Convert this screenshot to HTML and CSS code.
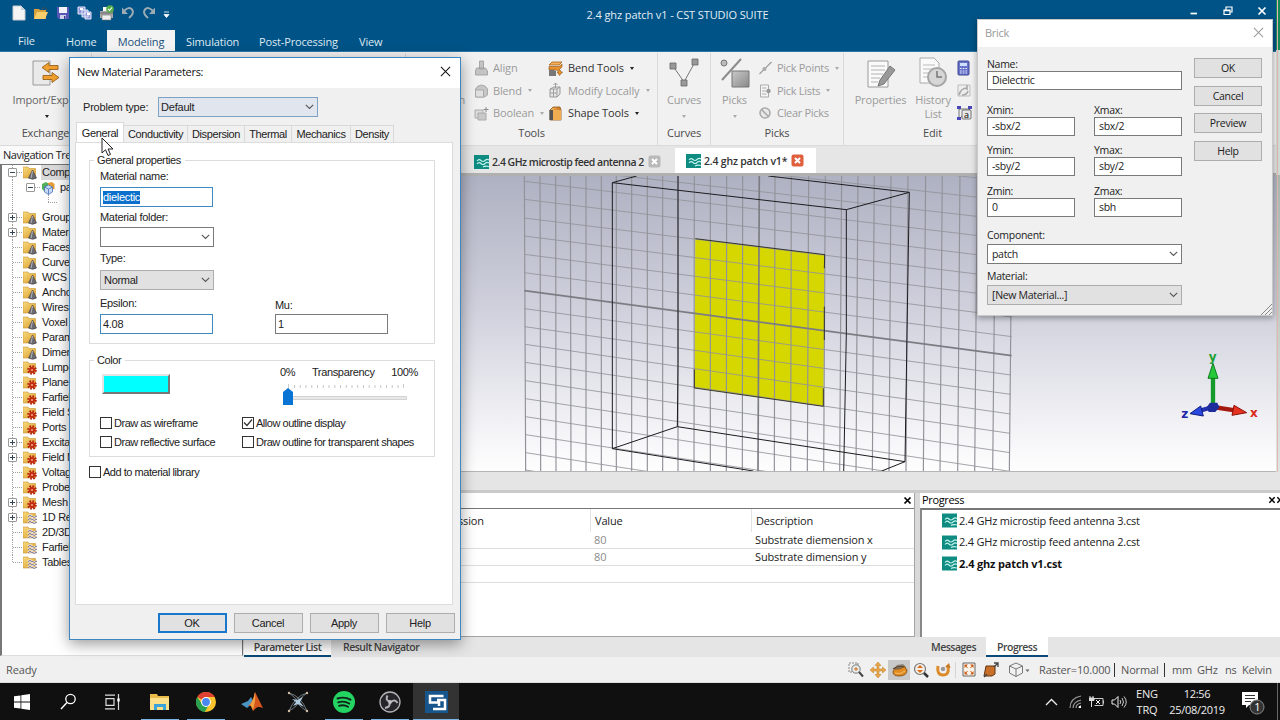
FILE: index.html
```html
<!DOCTYPE html>
<html lang="en">
<head>
<meta charset="utf-8">
<title>2.4 ghz patch v1 - CST STUDIO SUITE</title>
<link rel="stylesheet" href="styles.css">
</head>
<body>
<svg class="defs" width="0" height="0">
  <defs>
    <linearGradient id="fold" x1="0" y1="0" x2="1" y2="1"><stop offset="0" stop-color="#f8dc80"/><stop offset="1" stop-color="#d99a28"/></linearGradient>
    <linearGradient id="gry" x1="0" y1="0" x2="1" y2="1"><stop offset="0" stop-color="#c8c8c8"/><stop offset="1" stop-color="#8a8a8a"/></linearGradient>
    <linearGradient id="org" x1="0" y1="0" x2="1" y2="0"><stop offset="0" stop-color="#f6b860"/><stop offset="1" stop-color="#c8701a"/></linearGradient>
    <symbol id="folder" viewBox="0 0 14 14"><path d="M0 1h5l1 1.500h6.500V12H0z" fill="url(#fold)" stroke="#c99532" stroke-width=".6"/></symbol>
    <symbol id="f-cone" viewBox="0 0 14 14"><use href="#folder" width="14" height="14"/><path d="M9.500 4L5.500 12q4 2.500 8 0z" fill="#6a6a70" stroke="#3c3c42" stroke-width=".6"/><path d="M9.500 5L8 12.300" stroke="#b5b5bb"/></symbol>
    <symbol id="f-gear" viewBox="0 0 14 14"><use href="#folder" width="14" height="14"/><circle cx="9" cy="9" r="3.700" fill="none" stroke="#b3200f" stroke-width="2.200" stroke-dasharray="1.600 1.300"/><circle cx="9" cy="9" r="3" fill="#c22a16"/><circle cx="9" cy="9" r="1" fill="#f3b080"/></symbol>
    <symbol id="f-wave" viewBox="0 0 14 14"><use href="#folder" width="14" height="14"/><path d="M5 5.500q2-2 4 0t5-.5M5 8.500q2-2 4 0t5-.5M5 11.500q2-2 4 0t5-.5" fill="none" stroke="#fff" stroke-width="2"/><path d="M5 5.500q2-2 4 0t5-.5M5 8.500q2-2 4 0t5-.5M5 11.500q2-2 4 0t5-.5" fill="none" stroke="#5c5070" stroke-width=".9"/></symbol>
    <symbol id="cubes" viewBox="0 0 14 14"><path d="M1 3l4-2 3 2v6L4 11 1 8z" fill="#4fae58"/><path d="M7 2l4-1 2.500 2v5L10 9 7 7z" fill="#e69b35"/><path d="M3.500 6L7.500 4l4 2v5l-4 2.500-4-2.500z" fill="#c5d8f5" stroke="#4a72b8" stroke-width=".8"/><path d="M3.500 6l4 2 4-2M7.500 8v5.500" fill="none" stroke="#4a72b8" stroke-width=".8"/></symbol>
    <symbol id="cst" viewBox="0 0 15 14"><path d="M0 0h15v14H0z" fill="#0e8c82"/><path d="M3 6q2-2.500 4-.5t4 0 4-.5M3 9q2-2.500 4-.5t4 0 4-.5M9 12q2-1.500 6-.5" fill="none" stroke="#c4f3ec" stroke-width="1.100"/></symbol>
    <symbol id="chev" viewBox="0 0 9 6"><path d="M.8.8l3.700 3.700L8.200.8" fill="none" stroke="#555" stroke-width="1.100"/></symbol>
    <symbol id="xmark" viewBox="0 0 12 12"><path d="M1 1l10 10M11 1L1 11" fill="none" stroke="currentColor" stroke-width="1.100"/></symbol>
    <symbol id="xbold" viewBox="0 0 9 9"><path d="M1.500 1.500l6 6M7.500 1.500l-6 6" fill="none" stroke="currentColor" stroke-width="1.700"/></symbol>
    <symbol id="tabx" viewBox="0 0 13 13"><rect x=".5" y=".5" width="12" height="12" rx="2" fill="currentColor"/><path d="M4 4l5 5M9 4L4 9" stroke="#fff" stroke-width="2"/></symbol>
  </defs>
</svg>

<div class="app">
  <header class="titlebar">
    <div class="quick">
      <svg width="14" height="16" viewBox="0 0 14 16"><path d="M1 1h8l4 4v10H1z" fill="#f4f4f4" stroke="#c5ccd2"/><path d="M9 1v4h4z" fill="#c9d0d6"/></svg>
      <svg width="16" height="14" viewBox="0 0 16 14"><path d="M1 3h5l1 1h6v9H1z" fill="#d8a03c"/><path d="M4 6h11l-3 7H1z" fill="#f9cf6c"/><path d="M9 3q3-3 5 1" fill="none" stroke="#4a4a4a"/></svg>
      <svg width="14" height="14" viewBox="0 0 14 14"><path d="M1 1h12v12H3l-2-2z" fill="#5656b8"/><path d="M3 1h8v6H3z" fill="#f2f2fa"/><path d="M4 9h6v4H4z" fill="#d0d0e8"/><path d="M8 10h1.500v3H8z" fill="#3a3a90"/></svg>
      <svg width="15" height="14" viewBox="0 0 15 14"><path d="M1 1h7v7H1zM5 4h6v7H5zM8 6h6v7H8z" fill="#9097d8" stroke="#e4e6fa"/><path d="M3 2h3v2H3zM10 7h3v2h-3z" fill="#fff"/></svg>
      <svg width="15" height="16" viewBox="0 0 15 16"><path d="M4 2h7v5H4z" fill="#fff"/><path d="M1 6h13v7H1z" fill="#a8a8a8"/><path d="M3 10h9v5H3z" fill="#eee" stroke="#777" stroke-width=".6"/><path d="M1 8h13" stroke="#666"/><circle cx="11" cy="4" r="3.800" fill="#54ae48"/><path d="M9 4l1.500 1.500L13 2.500" fill="none" stroke="#fff" stroke-width="1.100"/></svg>
      <svg width="14" height="13" viewBox="0 0 14 13"><path d="M3 5q5-5 8-1.500T8 12" fill="none" stroke="#9caab4" stroke-width="2"/><path d="M1 1.500V8h6z" fill="#9caab4"/></svg>
      <svg width="14" height="13" viewBox="0 0 14 13"><path d="M11 5Q6 0 3 3.500T6 12" fill="none" stroke="#9caab4" stroke-width="2"/><path d="M13 1.500V8H7z" fill="#9caab4"/></svg>
      <svg class="qmore" width="7" height="7" viewBox="0 0 7 7"><path d="M1 1h5M1 3.500h5L3.500 6.500z" stroke="#fff" stroke-width=".8" fill="#fff"/></svg>
    </div>
    <div class="apptitle">2.4 ghz patch v1 - CST STUDIO SUITE</div>
    <div class="winctl">
      <svg width="10" height="10" viewBox="0 0 10 10"><path d="M1.500 7.500h6.500" stroke="#fff" stroke-width="1.700"/></svg>
      <svg width="10" height="10" viewBox="0 0 10 10"><path d="M3 3.500V1h6v5H7M1 4h6v4.500H1zM1 4.600h6" fill="none" stroke="#fff" stroke-width="1.200"/></svg>
      <svg width="10" height="10" viewBox="0 0 10 10"><path d="M1.500 1.500l7 7M8.500 1.500l-7 7" stroke="#fff" stroke-width="1.700"/></svg>
    </div>
  </header>
  <nav class="menubar">
    <span class="m-file">File</span><span class="m-home">Home</span><span class="m-on">Modeling</span><span class="m-sim">Simulation</span><span class="m-post">Post-Processing</span><span class="m-view">View</span>
  </nav>

  <section class="ribbon">
    <div class="grp g-ex">
      <div class="big">
        <svg width="28" height="26" viewBox="0 0 28 26"><path d="M1 1h17v24H1z" fill="#e9e9e9" stroke="#9a9a9a"/><path d="M26 5.500H17V2.500L10 7.500l7 5v-3h9z" fill="#f0a030" stroke="#9a6218" stroke-width=".9"/><path d="M11 15.500h9v-3l7 5-7 5v-3h-9z" fill="#f0a030" stroke="#9a6218" stroke-width=".9"/></svg>
        <span class="dk">Import/Exp</span><i class="dn"></i>
      </div>
      <div class="glabel">Exchange</div>
    </div>
    <div class="grp g-gap"></div>
    <div class="grp g-tools">
      <div class="cols">
        <div class="hidn">n</div>
        <div class="c1">
          <div class="rt"><svg width="14" height="16" viewBox="0 0 14 16"><path d="M2 8h9l2 3v4H1v-4zM5 1h4v8H5z" fill="#c4c4c4" stroke="#999" stroke-width=".8"/></svg>Align</div>
          <div class="rt"><svg width="14" height="14" viewBox="0 0 14 14"><path d="M1 5q2-4 6-4t6 4v6l-3 2H1z" fill="#c6c6c6" stroke="#aaa"/><path d="M1 6h8v7H1z" fill="#e0e0e0" stroke="#aaa"/></svg>Blend<i class="dn"></i></div>
          <div class="rt"><svg width="15" height="15" viewBox="0 0 15 15"><path d="M1 4h8v8H1z" fill="#ddd" stroke="#aaa"/><path d="M4 7h8v7H4z" fill="#c9c9c9" stroke="#aaa"/><path d="M12 1v5M9.500 3.500h5" stroke="#888"/></svg>Boolean<i class="dn"></i></div>
        </div>
        <div class="c2">
          <div class="rt on"><svg width="15" height="15" viewBox="0 0 15 15"><path d="M4 1h10l-3 3H1z" fill="#f6b058" stroke="#a8661c" stroke-width=".8"/><path d="M1 5.500h10L14 3v3l-3 3q2 0 2 2h1.500l-3 3.500L9 11h1.500q0-2-3-2H1z" fill="#e8922e" stroke="#8a5216" stroke-width=".6"/><path d="M1 9q4-1 7 1v5H1z" fill="#777"/></svg>Bend Tools<i class="dn"></i></div>
          <div class="rt"><svg width="15" height="15" viewBox="0 0 15 15"><path d="M2 6l4-2h6v7l-3 3H2z" fill="#e6e6e6" stroke="#999"/><path d="M2 6h7v8M9 6l3-2M2 10h7M5.500 6v8M7.500 5V0M5.500 2l2-2 2 2" fill="none" stroke="#999" stroke-width=".9"/></svg>Modify Locally<i class="dn"></i></div>
          <div class="rt on"><svg width="15" height="15" viewBox="0 0 15 15"><path d="M2 4l3-3h7l1 3v10H2z" fill="url(#org)" stroke="#8b581e" stroke-width=".8"/><path d="M5 4h8v10H5z" fill="#efac50"/><path d="M1.500 4H5v10H1.500z" fill="#555"/></svg>Shape Tools<i class="dn"></i></div>
        </div>
      </div>
      <div class="glabel">Tools</div>
    </div>
    <div class="grp g-curves">
      <div class="big">
        <svg width="30" height="30" viewBox="0 0 30 30"><path d="M4 8l11 16L26 4" fill="none" stroke="#777"/><path d="M1 5h6v6H1zM23 1h6v6h-6zM12 22h6v6h-6z" fill="#999" stroke="#666" stroke-width=".8"/></svg>
        <span>Curves</span><i class="dn"></i>
      </div>
      <div class="glabel">Curves</div>
    </div>
    <div class="grp g-picks">
      <div class="cols">
        <div class="big">
          <svg width="30" height="30" viewBox="0 0 30 30"><circle cx="4" cy="5" r="3" fill="#bbb" stroke="#777"/><path d="M2 22L21 1" stroke="#8b8b8b" stroke-width="2"/><path d="M12 13h17v16H12z" fill="url(#gry)" stroke="#777"/></svg>
          <span>Picks</span><i class="dn"></i>
        </div>
        <div class="c3">
          <div class="rt"><svg width="14" height="14" viewBox="0 0 14 14"><path d="M1 13L13 1" stroke="#999" stroke-width="1.200"/><circle cx="6" cy="8" r="2" fill="#aaa"/></svg>Pick Points<i class="dn"></i></div>
          <div class="rt"><svg width="14" height="14" viewBox="0 0 14 14"><path d="M2 1h8v12H2z" fill="#f6f6f6" stroke="#aaa"/><path d="M3.500 4H8M3.500 7H8M3.500 10H8" stroke="#aaa"/><circle cx="10" cy="7" r="2.200" fill="#999"/></svg>Pick Lists<i class="dn"></i></div>
          <div class="rt"><svg width="14" height="14" viewBox="0 0 14 14"><circle cx="6.500" cy="7" r="5" fill="#e8e8e8" stroke="#aaa" stroke-width="1.600"/><path d="M3 3.500l7.500 7.500" stroke="#aaa" stroke-width="1.600"/></svg>Clear Picks</div>
        </div>
      </div>
      <div class="glabel">Picks</div>
    </div>
    <div class="grp g-edit">
      <div class="cols">
        <div class="big b-prop">
          <svg width="30" height="30" viewBox="0 0 30 30"><path d="M2 3h20v26H2z" fill="#fafafa" stroke="#999"/><path d="M5 8h14M5 12h14M5 16h12M5 20h9M5 24h7" stroke="#b2b2b2"/><path d="M24 8l5 4-11 14-6 2 2-6z" fill="#999" stroke="#777"/></svg>
          <span>Properties</span>
        </div>
        <div class="big b-hist">
          <svg width="30" height="32" viewBox="0 0 30 32"><path d="M2 1h14l5 5v20H2z" fill="#fafafa" stroke="#aaa"/><path d="M5 8h12M5 12h10M5 16h6M5 20h5" stroke="#bbb"/><circle cx="19" cy="20" r="9" fill="#d6d6d6" stroke="#a5a5a5" stroke-width="2"/><path d="M19 14v6h5" stroke="#777" stroke-width="1.500" fill="none"/></svg>
          <span>History</span><span class="l2">List</span>
        </div>
        <div class="c4">
          <svg width="14" height="16" viewBox="0 0 14 16"><rect x="1" y="1" width="11" height="14" rx="1" fill="#6673c8" stroke="#3c4794"/><path d="M3 3h7v3H3z" fill="#cfe0ff"/><path d="M3 8.500h7M3 11h7M3 13h7" stroke="#dfe4ff" stroke-dasharray="1.700 1"/></svg>
          <svg width="14" height="15" viewBox="0 0 14 15"><path d="M1 2h12v11H1z" fill="#eee" stroke="#bbb"/><path d="M2 12Q4 5 10 5M10 2v5M5 12q5 0 6-4" fill="none" stroke="#a9a9a9" stroke-width="1.600"/></svg>
          <svg width="15" height="15" viewBox="0 0 15 15"><path d="M2 14V4h11L2 14" fill="none" stroke="#555" stroke-width=".8"/><path d="M0 1h4v3H0zM0 12h4v3H0zM11 1h4v3h-4z" fill="#4946b8"/><rect x="5" y="5" width="9" height="9" rx="1" fill="#e8e8e8" stroke="#555" stroke-width=".8"/><text x="7" y="12.500" class="mini">a</text></svg>
        </div>
      </div>
      <div class="glabel">Edit</div>
    </div>
  </section>

  <div class="work">
    <aside class="navpane">
      <div class="navhead">Navigation Tre</div>
      <div class="tree">
        <div class="ti root sel"><b class="pm mi"></b><svg><use href="#f-cone"/></svg><span>Compo</span></div>
        <div class="ti sub"><b class="pm mi"></b><svg><use href="#cubes"/></svg><span>pa</span></div>
        <div class="ti leaf"></div>
        <div class="ti"><b class="pm"></b><svg><use href="#f-cone"/></svg><span>Group</span></div>
        <div class="ti"><b class="pm"></b><svg><use href="#f-cone"/></svg><span>Materi</span></div>
        <div class="ti"><svg><use href="#f-cone"/></svg><span>Faces</span></div>
        <div class="ti"><svg><use href="#f-cone"/></svg><span>Curve</span></div>
        <div class="ti"><svg><use href="#f-cone"/></svg><span>WCS</span></div>
        <div class="ti"><svg><use href="#f-cone"/></svg><span>Ancho</span></div>
        <div class="ti"><svg><use href="#f-cone"/></svg><span>Wires</span></div>
        <div class="ti"><svg><use href="#f-cone"/></svg><span>Voxel</span></div>
        <div class="ti"><svg><use href="#f-cone"/></svg><span>Param</span></div>
        <div class="ti"><svg><use href="#f-cone"/></svg><span>Dimen</span></div>
        <div class="ti"><svg><use href="#f-gear"/></svg><span>Lumpe</span></div>
        <div class="ti"><svg><use href="#f-gear"/></svg><span>Plane</span></div>
        <div class="ti"><svg><use href="#f-gear"/></svg><span>Farfiel</span></div>
        <div class="ti"><svg><use href="#f-gear"/></svg><span>Field S</span></div>
        <div class="ti"><svg><use href="#f-gear"/></svg><span>Ports</span></div>
        <div class="ti"><b class="pm"></b><svg><use href="#f-gear"/></svg><span>Excita</span></div>
        <div class="ti"><b class="pm"></b><svg><use href="#f-gear"/></svg><span>Field M</span></div>
        <div class="ti"><svg><use href="#f-gear"/></svg><span>Voltag</span></div>
        <div class="ti"><svg><use href="#f-gear"/></svg><span>Probe</span></div>
        <div class="ti"><b class="pm"></b><svg><use href="#f-gear"/></svg><span>Mesh</span></div>
        <div class="ti"><b class="pm"></b><svg><use href="#f-wave"/></svg><span>1D Re</span></div>
        <div class="ti"><svg><use href="#f-wave"/></svg><span>2D/3D</span></div>
        <div class="ti"><svg><use href="#f-wave"/></svg><span>Farfiel</span></div>
        <div class="ti last"><svg><use href="#f-wave"/></svg><span>Tables</span></div>
      </div>
    </aside>
    <main class="center">
      <div class="doctabs">
        <div class="dt d1"><svg width="15" height="14"><use href="#cst"/></svg><span>2.4 GHz microstip feed antenna 2</span><svg class="cx" width="13" height="13"><use href="#tabx"/></svg></div>
        <div class="dt d2"><svg width="15" height="14"><use href="#cst"/></svg><span>2.4 ghz patch v1*</span><svg class="cx red" width="13" height="13"><use href="#tabx"/></svg></div>
      </div>
      <svg class="view" width="1037" height="295" viewBox="-831 18 3111 885">
        <defs><linearGradient id="sky" x1="0" y1="0" x2="0" y2="1"><stop offset="0" stop-color="#adb0c1"/><stop offset=".45" stop-color="#cfd0dc"/><stop offset=".85" stop-color="#f4f4f7"/><stop offset="1" stop-color="#fff"/></linearGradient></defs>
        <path d="M-840 0h3200v920h-3200z" fill="url(#sky)"/>
        <path d="M526 206L915 254 910 709 523 654z" fill="#d6d600"/>
        <g fill="none" stroke="#929399" stroke-width="3.500">
          <path d="M13 0L17 910M60 0L62 910M107 0L108 910M151 0L153 910M198 0V910M244 0V910M289 0V910M335 0V910M382 0V910M428 0V910M474 0V910M523 0L522 910M571 0V910M620 0L619 910M668 0L667 910M765 0L763 910M814 0L812 910M866 0L862 910M916 0L911 910M965 0L959 910M1014 0L1008 910M1063 0L1057 910M1113 0L1107 910M1164 0L1158 910M1217 0L1210 910M1267 0L1260 910M1320 0L1313 910M1372 0L1364 910M1427 0L1418 910M1477 0L1468 910"/>
          <path d="M13-124L1475 35M13-70L1475 93M13-16L1475 151M13 34L1475 209M13 88L1475 267M13 144L1475 325M13 198L1475 383M13 253L1475 441M13 308L1475 500M14 416L1473 615M14 470L1472 673M15 523L1471 732M15 577L1470 790M16 632L1470 848M16 686L1469 904M16 740L1468 960M17 794L1468 1016M17 848L1467 1072M17 900L1467 1128" stroke-width="2.500"/>
          <path d="M718 0L714 910" stroke="#7c7d83" stroke-width="5"/>
          <path d="M13 362L1475 557" stroke="#7c7d83" stroke-width="5"/>
        </g>
        <g fill="none" stroke="#1c1c20" stroke-width="3">
          <path d="M277 836V38L979 119V490L971 910M277 38L350 18M745 18L1168 67L979 119M1168 67L1164 300 1155 875M474 10V580L472 770L1155 875L1085 903M472 770L277 836L700 903"/>
          <path d="M526 206L915 254M914 255l-1 40M913 410v100M910 655v54L523 654v-56" stroke-width="2.500"/>
        </g>
        <path d="M2079 711V615" stroke="#159a2c" stroke-width="13"/><path d="M2079 580L2064 625H2094z" fill="#28c83c" stroke="#0c7c1c" stroke-width="3"/>
        <path d="M2079 711L2150 722" stroke="#a41a10" stroke-width="13"/><path d="M2180 728L2142 706 2136 736z" fill="#e63220" stroke="#8c1008" stroke-width="3"/>
        <path d="M2079 711L2040 722" stroke="#2230b0" stroke-width="13"/><path d="M2010 731L2042 708 2050 738z" fill="#2a48e0" stroke="#101c80" stroke-width="3"/>
        <path d="M2070 698h22l6 14-12 14h-20l-6-14z" fill="#1c2c9c"/>
        <text class="ax" x="2066" y="574" fill="#18a030">y</text><text class="ax" x="2190" y="740" fill="#d82818">x</text><text class="ax" x="1984" y="744" fill="#2028a8">z</text>
      </svg>
      <div class="band"></div>
      <div class="panels">
        <div class="params">
          <div class="phead"><svg width="9" height="9"><use href="#xbold"/></svg></div>
          <div class="ptable">
            <div class="prow ph"><span>ssion</span><span>Value</span><span>Description</span></div>
            <div class="prow"><span></span><span class="g">80</span><span>Substrate diemension x</span></div>
            <div class="prow"><span></span><span class="g">80</span><span>Substrate dimension y</span></div>
            <div class="prow"><span></span><span></span><span></span></div>
          </div>
        </div>
        <div class="progress">
          <div class="phead"><span>Progress</span><div class="xs"><svg width="8" height="8"><use href="#xbold"/></svg><svg width="8" height="8"><use href="#xbold"/></svg></div></div>
          <div class="plist">
            <div><svg width="15" height="15"><use href="#cst"/></svg>2.4 GHz microstip feed antenna 3.cst</div>
            <div><svg width="15" height="15"><use href="#cst"/></svg>2.4 GHz microstip feed antenna 2.cst</div>
            <div class="cur"><svg width="15" height="15"><use href="#cst"/></svg>2.4 ghz patch v1.cst</div>
          </div>
        </div>
      </div>
      <div class="btabs">
        <div class="bl"><span class="bt on">Parameter List</span><span class="bt rn">Result Navigator</span></div>
        <div class="br"><span class="bt ms">Messages</span><span class="bt on">Progress</span></div>
      </div>
    </main>
  </div>

  <footer class="status">
    <span class="ready">Ready</span>
    <div class="sicons">
      <span><svg width="16" height="16" viewBox="0 0 16 16"><path d="M1 1h9v9H1z" fill="none" stroke="#888" stroke-dasharray="2 1"/><circle cx="8" cy="7" r="4.200" fill="#e8edf0" stroke="#777"/><path d="M11 10l4 4.500" stroke="#444" stroke-width="2"/><path d="M6 7h4M8 5v4" stroke="#d07018"/></svg></span>
      <span><svg width="16" height="16" viewBox="0 0 16 16"><path d="M8 0l3 3.500H9v3.500h3.500V5L16 8l-3.500 3V9H9v3.500h2L8 16l-3-3.500h2V9H3.500v2L0 8l3.500-3v2H7V3.500H5z" fill="#eba848" stroke="#b87a28" stroke-width=".5"/></svg></span>
      <span class="son"><svg width="17" height="16" viewBox="0 0 17 16"><path d="M3 7l3-4 6-1 3 3v4l-5-2z" fill="#8c8478"/><path d="M2 10q0-3 5-3 4 0 6-3l3 4q0 6-8 6-6 0-6-4z" fill="#e08a20" stroke="#7c4a10" stroke-width=".8"/><path d="M2 7q5-4 11-2" stroke="#5c4630" stroke-width="1.300" fill="none"/><path d="M4 11q5 2 10-2" stroke="#f7c070" fill="none"/></svg></span>
      <span><svg width="16" height="16" viewBox="0 0 16 16"><circle cx="7" cy="7" r="5.500" fill="#f4eee6" stroke="#777" stroke-width="1.200"/><path d="M11 11l4 4" stroke="#333" stroke-width="2.500"/><path d="M4 6l3-3 3 3zM4 8l3 3 3-3z" fill="#d86c18"/></svg></span>
      <span><svg width="16" height="16" viewBox="0 0 16 16"><path d="M3 4q-1.500 9 5 9t5-8" fill="none" stroke="#dc8c28" stroke-width="3"/><path d="M10 5l4-4 1.500 5z" fill="#c87820"/><circle cx="8" cy="7" r="2.200" fill="#999"/></svg></span>
      <i class="ssep"></i>
      <span><svg width="14" height="15" viewBox="0 0 14 15"><path d="M1 1h12v13H1z" fill="#fbf3ea" stroke="#666"/><path d="M2.500 2.500H6L2.500 6zM11.500 2.500H8L11.500 6zM2.500 12.500H6L2.500 9zM11.500 12.500H8L11.500 9z" fill="#c85c18"/><path d="M3 3l2.500 3M11 3L8.500 6M3 12l2.500-3M11 12L8.500 9" stroke="#c85c18"/></svg></span>
      <span><svg width="16" height="16" viewBox="0 0 16 16"><path d="M3 4h9v8l-3 2H1z" fill="#c8702a" stroke="#653410"/><path d="M1 15l3-3M11 5l4-4M11 1h4v4" stroke="#444" stroke-width="1.300" fill="none"/></svg></span>
      <span class="cubeb"><svg width="24" height="16" viewBox="0 0 24 16"><path d="M1.500 4L8 1l6.500 3v7L8 14.500 1.500 11zM1.500 4L8 7l6.500-3M8 7v7.500" fill="#f2f2f2" stroke="#777"/><path d="M17.500 7.500h4L19.500 10z" fill="#666"/></svg></span>
    </div>
    <span class="s1">Raster=10.000</span><span class="s2">Normal</span><span class="s3">mm</span><span class="s4">GHz</span><span class="s5">ns</span><span class="s6">Kelvin</span>
  </footer>

  <footer class="taskbar">
    <div class="apps">
      <span><svg width="16" height="16" viewBox="0 0 16 16"><path d="M0 2.300l6.500-.9V7.600H0zM7.300 1.300L16 0v7.600H7.300zM0 8.400h6.500v6.200L0 13.700zM7.300 8.400H16V16l-8.700-1.300z" fill="#fff"/></svg></span>
      <span><svg width="17" height="17" viewBox="0 0 17 17"><circle cx="10.500" cy="6" r="4.700" fill="none" stroke="#fff" stroke-width="1.300"/><path d="M7 9.500L1 16" stroke="#fff" stroke-width="1.400"/></svg></span>
      <span class="tv"><svg width="17" height="16" viewBox="0 0 17 16"><path d="M1 1.200h10M1 14.800h10M2 4v8M10 4v8M2 4.600h8M2 11.400h8M14.500 0v16" fill="none" stroke="#ddd" stroke-width="1.200"/><path d="M13.300 4.500h2.400v3h-2.400z" fill="#fff"/></svg></span>
      <span class="run"><svg width="22" height="18" viewBox="0 0 22 18"><path d="M1 1h7l1 2h11v14H1z" fill="#e9bc48"/><path d="M1 5h19v12H1z" fill="#fbe08c"/><path d="M5 17v-6h12v6h-3v-3H8v3z" fill="#3ba2dc"/></svg></span>
      <span class="run"><svg width="22" height="22" viewBox="0 0 22 22"><circle cx="11" cy="11" r="10" fill="#fcc42c"/><path d="M11 11L2.300 6A10 10 0 0 1 19.700 6H11z" fill="#de4032"/><path d="M2.300 6a10 10 0 0 0 7.500 15L14 13.500 7 13z" fill="#27a050"/><circle cx="11" cy="11" r="4.900" fill="#fff"/><circle cx="11" cy="11" r="3.900" fill="#4888f0"/></svg></span>
      <span><svg width="22" height="20" viewBox="0 0 22 20"><path d="M0 12l7-3 3-4 3 5-7 6z" fill="#4a94c4"/><path d="M7 14q5-3 7-14 3 6 8 16-5-2-7 0l-3 3-2-5z" fill="#d5561c"/><path d="M14 0q-2 10-5 12l3 6q3-10 2-18z" fill="#f4a040"/></svg></span>
      <span><svg width="22" height="22" viewBox="0 0 22 22"><path d="M2 2q8 6 9 9T2 20M20 2q-8 6-9 9t9 9M2 2q12 3 18 18M20 2Q8 5 2 20" fill="none" stroke="#7c8890" stroke-width=".9"/><path d="M5 8l5 1 6-3-3 5 4 5-6-3-5 2 3-4z" fill="#b0cce0"/><g fill="#d4c0a0"><circle cx="2" cy="2" r="1.200"/><circle cx="20" cy="2" r="1.200"/><circle cx="2" cy="20" r="1.200"/><circle cx="20" cy="20" r="1.200"/></g></svg></span>
      <span class="run"><svg width="22" height="22" viewBox="0 0 22 22"><circle cx="11" cy="11" r="11" fill="#24d462"/><path d="M4.500 7.500q7-2.200 13 1.200M5.200 11.300q6-1.700 11 1.200M6 14.800q5-1.400 9 1" fill="none" stroke="#10241a" stroke-width="1.900" stroke-linecap="round"/></svg></span>
      <span class="run"><svg width="22" height="22" viewBox="0 0 22 22"><circle cx="11" cy="11" r="10" fill="#26262a" stroke="#b4b4b8" stroke-width="1.300"/><path d="M10.500 10.500Q6 9 8.500 4.500M12 11q4-3.500 6.500 1M10.500 12q1 4-4.500 5" fill="none" stroke="#b4b4b8" stroke-width="2"/><circle cx="11" cy="11" r="1.900" fill="#c4c4c8"/></svg></span>
      <span class="run act"><svg width="23" height="22" viewBox="0 0 23 22"><path d="M0 0h23v22H0z" fill="#17568c"/><path d="M18.500 5H5v6.500h9V15M8 18h12V9h-8" fill="none" stroke="#fff" stroke-width="2.500"/></svg></span>
    </div>
    <div class="tray">
      <svg class="t1" width="13" height="8" viewBox="0 0 13 8"><path d="M1 7l5.500-5.500L12 7" fill="none" stroke="#eee" stroke-width="1.300"/></svg>
      <svg class="t2" width="14" height="14" viewBox="0 0 14 14"><path d="M1 13Q1 3 12 1M4 13q0-6 8-8M7 13q0-4 5-5" fill="none" stroke="#999" stroke-width="1.200"/><path d="M9.500 13q0-2.500 2.500-2.500V13z" fill="#fff"/></svg>
      <svg class="t3" width="16" height="12" viewBox="0 0 16 12"><path d="M4 2.500h10v7H5.500M14.500 4.500v3" fill="none" stroke="#ccc"/><path d="M1 0v2M4 0v2M0 2h5v2.500H0zM2.500 4v7" stroke="#ddd" fill="#ddd"/><path d="M7 4l4 4M11 4L7 8" stroke="#fff"/></svg>
      <svg class="t4" width="16" height="14" viewBox="0 0 16 14"><path d="M1 5h2.500L7 1.500v11L3.500 9H1z" fill="none" stroke="#eee"/><path d="M9 5q1.500 2 0 4M11 3q3 4 0 8M13 1.500q4.500 5.500 0 11" fill="none" stroke="#ccc"/></svg>
      <div class="lang">ENG<br>TRQ</div>
      <div class="clock">12:56<br>25/08/2019</div>
      <svg class="t5" width="24" height="24" viewBox="0 0 24 24"><path d="M1 1h16v13H8l-3 3v-3H1z" fill="#fff"/><path d="M4 4.500h10M4 7.500h10M4 10.500h6" stroke="#333" stroke-width="1.100"/><circle cx="16" cy="16" r="7" fill="#333" stroke="#888"/><text x="13.200" y="20" class="one">1</text></svg>
      <i class="peek"></i>
    </div>
  </footer>
</div>

<div class="edge"></div>

<section class="dlg brick">
  <div class="dtitle"><span>Brick</span><svg width="11" height="11"><use href="#xmark"/></svg></div>
  <div class="bbody">
    <div class="bform">
      <label class="w2">Name:</label>
      <div class="inp w2">Dielectric</div>
      <label>Xmin:</label><label>Xmax:</label>
      <div class="inp">-sbx/2</div><div class="inp">sbx/2</div>
      <label>Ymin:</label><label>Ymax:</label>
      <div class="inp">-sby/2</div><div class="inp">sby/2</div>
      <label>Zmin:</label><label>Zmax:</label>
      <div class="inp">0</div><div class="inp">sbh</div>
      <label class="w2 up">Component:</label>
      <div class="inp w2 cmb">patch<svg width="9" height="6"><use href="#chev"/></svg></div>
      <label class="w2 up">Material:</label>
      <div class="inp w2 cmb gray">[New Material...]<svg width="9" height="6"><use href="#chev"/></svg></div>
    </div>
    <div class="bbtns"><div class="btn">OK</div><div class="btn">Cancel</div><div class="btn">Preview</div><div class="btn">Help</div></div>
  </div>
  <svg class="grip" width="11" height="11" viewBox="0 0 11 11"><path d="M0 11L11 0M4 11l7-7M8 11l3-3" stroke="#888"/></svg>
</section>

<section class="dlg mat">
  <div class="dtitle"><span>New Material Parameters:</span><svg width="12" height="12"><use href="#xmark"/></svg></div>
  <div class="prob"><span>Problem type:</span><div class="inp cmb">Default<svg width="9" height="6"><use href="#chev"/></svg></div></div>
  <div class="mtabs"><span class="on">General</span><span>Conductivity</span><span>Dispersion</span><span>Thermal</span><span>Mechanics</span><span>Density</span></div>
  <div class="pane">
    <fieldset class="fs1">
      <legend>General properties</legend>
      <div class="f1">
        <label>Material name:</label>
        <div class="inp foc"><mark>dielectic</mark></div>
        <label>Material folder:</label>
        <div class="inp cmb"><svg width="9" height="6"><use href="#chev"/></svg></div>
        <label>Type:</label>
        <div class="inp cmb gray">Normal<svg width="9" height="6"><use href="#chev"/></svg></div>
        <label>Epsilon:</label><label class="mu">Mu:</label>
        <div class="inp foc">4.08</div><div class="inp mui">1</div>
      </div>
    </fieldset>
    <fieldset class="fs2">
      <legend>Color</legend>
      <div class="f2">
        <div class="swatch"></div>
        <div class="slide">
          <div class="sl"><span>0%</span><span>Transparency</span><span>100%</span></div>
          <svg width="128" height="24" viewBox="0 0 128 24"><path d="M5.500 2v5M120.500 2v4" stroke="#ccc"/><path d="M11 4.500h107" stroke="#c8c8c8" stroke-width="3" stroke-dasharray="1 4.750"/><path d="M1.500 14.500h122v3H1.500z" fill="#e8e8e8" stroke="#d2d2d2"/><path d="M0 10l5-4 5 4v13H0z" fill="#0a74d4"/></svg>
        </div>
      </div>
      <div class="ck2">
        <div class="ck"><i></i>Draw as wireframe</div><div class="ck"><i><svg width="12" height="12" viewBox="0 0 12 12"><path d="M2 5.500l3 3L10 2.500" fill="none" stroke="#333" stroke-width="1.200"/></svg></i>Allow outline display</div>
        <div class="ck"><i></i>Draw reflective surface</div><div class="ck"><i></i>Draw outline for transparent shapes</div>
      </div>
    </fieldset>
    <div class="ck lib"><i></i>Add to material library</div>
  </div>
  <div class="mbtns"><div class="btn def">OK</div><div class="btn">Cancel</div><div class="btn">Apply</div><div class="btn">Help</div></div>
</section>

<svg class="cursor" width="13" height="20" viewBox="0 0 13 20"><path d="M1 1v15l3.500-3.200L7 18.500l2.500-1.100-2.400-5.400H12z" fill="#fff" stroke="#222"/></svg>
</body>
</html>
```
FILE: styles.css
```css
* { box-sizing: border-box; }
body { margin: 0; width: 1280px; height: 720px; overflow: hidden; font: 11px/14px "Open Sans", "Noto Sans", sans-serif; color: #222; letter-spacing: -0.15px; white-space: nowrap; position: relative; }
svg { display: block; flex: none; }
.defs { position: absolute; }
.app { display: flex; flex-direction: column; width: 1280px; height: 720px; background: #e5e5e5; }

.titlebar { height: 30px; background: #005386; display: flex; color: #e4eef5; }
.quick { display: flex; align-items: center; gap: 7px; width: 420px; padding: 0 0 5px 12px; }
.qmore { margin-top: 3px; }
.apptitle { width: 515px; text-align: center; padding-top: 8px; letter-spacing: -.1px; }
.winctl { flex: 1; display: flex; justify-content: flex-end; gap: 24px; padding: 6px 13px 0 0; }

.menubar { height: 22px; background: #005386; color: #dce9f2; display: flex; line-height: 23px; border-bottom: 1px solid #2b76a5; }
.menubar span { flex: none; height: 21px; }
.m-file { padding-left: 18px; width: 66px; line-height: 21px; }
.m-home { width: 41px; }
.m-on { width: 68px; text-align: center; background: #f3f3f3; color: #1c5079; }
.m-sim { padding-left: 11px; width: 84px; }
.m-post { width: 100px; }

.ribbon { height: 94px; background: #f1f1f1; display: flex; border-bottom: 1px solid #dadada; }
.grp { flex: none; display: flex; flex-direction: column; justify-content: space-between; border-right: 1px solid #d9d9d9; padding: 4px 0 5px; margin-top: 1px; color: #9b9b9b; overflow: hidden; }
.glabel { text-align: center; color: #4b4b4b; }
.g-ex { width: 92px; }
.g-gap { width: 314px; }
.g-tools { width: 252px; }
.g-curves { width: 53px; }
.g-picks { width: 133px; }
.g-edit { width: 178px; }
.cols { display: flex; }
.big { display: flex; flex-direction: column; align-items: center; }
.big svg { height: 32px; }
.big span { margin-top: 4px; }
.big .dn { margin: 8px 0 0; }
.g-ex .big { padding-right: 0; }
.g-ex .dk { color: #666; width: 66px; }
.dn { display: inline-block; border: 2.500px solid transparent; border-top: 3px solid #aaa; border-bottom: 0; margin-left: 6px; }
.g-ex .dn { border-top-color: #222; margin-left: 3px; }
.hidn { width: 68px; padding: 36px 9px 0 0; text-align: right; }
.c1 { width: 74px; }
.rt { display: flex; align-items: center; height: 22.500px; }
.rt svg { margin-right: 4px; width: 15px; }
.c2 .rt svg { margin-right: 5px; }
.c2 .rt { letter-spacing: -.1px; }
.rt.on { color: #333; }
.rt.on .dn { border-top-color: #222; }
.g-picks .big { width: 47px; }
.c3 .rt { letter-spacing: -.3px; }
.b-prop { width: 73px; }
.b-hist { width: 32px; }
.b-hist .l2 { margin-top: 0; }
.c4 { display: flex; flex-direction: column; gap: 7px; padding: 3px 0 0 8px; }
.mini { font: 9px "Open Sans", sans-serif; }

.work { height: 511px; display: flex; }
.navpane { width: 243px; display: flex; flex-direction: column; background: #f0f0f0; }
.navhead { height: 18px; padding: 2px 0 0 3px; color: #222; background: #fafafa; letter-spacing: -.45px; }
.tree { height: 492px; background: #fff; border: 1px solid #777; border-left: 2px solid #777; border-bottom-color: #ddd; font: 11px/15px "Liberation Sans", sans-serif; letter-spacing: -.3px; color: #222; }
.ti { height: 15px; display: flex; align-items: center; padding-left: 21px; position: relative; background: repeating-linear-gradient(180deg, #a0a0a0 0 1px, transparent 1px 2px) 10px 0 / 1px 15px no-repeat, repeating-linear-gradient(90deg, #a0a0a0 0 1px, transparent 1px 2px) 11px 7px / 10px 1px no-repeat; }
.last { background: repeating-linear-gradient(180deg, #a0a0a0 0 1px, transparent 1px 2px) 10px 0 / 1px 8px no-repeat, repeating-linear-gradient(90deg, #a0a0a0 0 1px, transparent 1px 2px) 11px 7px / 10px 1px no-repeat; }
.ti svg { width: 14px; height: 14px; margin-right: 4px; }
.ti span { padding-left: 1px; }
.sel span { background: #d9d9d9; width: 60px; }
.sub { padding-left: 39px; background: repeating-linear-gradient(180deg, #a0a0a0 0 1px, transparent 1px 2px) 10px 0 / 1px 15px no-repeat, repeating-linear-gradient(90deg, #a0a0a0 0 1px, transparent 1px 2px) 29px 7px / 10px 1px no-repeat; }
.leaf { background: repeating-linear-gradient(180deg, #a0a0a0 0 1px, transparent 1px 2px) 10px 0 / 1px 15px no-repeat, repeating-linear-gradient(180deg, #a0a0a0 0 1px, transparent 1px 2px) 46px 0 / 1px 8px no-repeat, repeating-linear-gradient(90deg, #a0a0a0 0 1px, transparent 1px 2px) 46px 7px / 10px 1px no-repeat; }
.pm { position: absolute; left: 6px; top: 3px; width: 9px; height: 9px; border: 1px solid #999; border-radius: 1px; background: linear-gradient(#345, #345) 1px 3px / 5px 1px no-repeat, linear-gradient(#345, #345) 3px 1px / 1px 5px no-repeat, #fff; }
.pm.mi { background: linear-gradient(#345, #345) 1px 3px / 5px 1px no-repeat, #fff; }
.sub .pm { left: 24px; }

.center { width: 1037px; display: flex; flex-direction: column; }
.doctabs { height: 30px; background: #e6e6e6; display: flex; padding: 2px 0 0 220px; border-bottom: 3px solid #b0b0b0; font-weight: 600; font-size: 10.500px; letter-spacing: -.2px; }
.dt { display: flex; align-items: center; height: 25px; color: #333; }
.d1 { width: 212px; padding: 2px 0 0 11px; gap: 3px; letter-spacing: -.5px; }
.d2 { width: 141px; background: #fff; padding-left: 11px; gap: 3px; }
.cx { color: #b9b9b9; margin-left: 1px; }
.cx.red { color: #e0603e; }
.view { height: 295px; }
.ax { font: bold 36px "DejaVu Sans", sans-serif; }
.band { height: 22px; background: #e5e5e5; border-top: 1px solid #b5b5b5; border-bottom: 3px solid #cacaca; }
.panels { height: 144px; display: flex; gap: 5px; background: #d9d9d9; }
.params { width: 672px; background: #fff; border-right: 1px solid #a5a5a5; }
.phead { height: 15px; display: flex; align-items: center; justify-content: flex-end; padding: 0 2px 1px 0; background: #fff; letter-spacing: -.35px; color: #000; }
.ptable { border-top: 1px solid #777; height: 129px; border-bottom: 1px solid #a5a5a5; }
.prow { height: 17px; display: grid; grid-template-columns: 347px 161px 1fr; align-items: center; border-bottom: 1px solid #ddd; }
.prow span { padding-left: 4px; line-height: 14px; }
.prow .g { color: #8c8c8c; }
.ph { height: 23px; border: 0; }
.ph span { border-left: 1px solid #e2e2e2; line-height: 23px; }
.ph span:first-child { padding-left: 215px; }
.prow > :first-child { border-left: 0; }
.progress { flex: 1; background: #fff; }
.progress .phead { justify-content: space-between; padding: 0 0 1px 2px; overflow: hidden; }
.xs { display: flex; width: 12px; }
.plist { border-top: 2px solid #777; border-left: 2px solid #888; height: 129px; padding: 0 0 0 20px; letter-spacing: -.2px; }
.plist div { display: flex; gap: 2px; align-items: center; height: 21.500px; }
.plist .cur { font-weight: 700; color: #111; letter-spacing: -.15px; }
.btabs { height: 20px; display: flex; background: #e5e5e5; font-weight: 600; font-size: 10.500px; color: #444; letter-spacing: -.5px; }
.bl { width: 688px; display: flex; padding-left: 1px; }
.br { display: flex; }
.bt { height: 20px; line-height: 20px; }
.bt.on { background: #fff; border-bottom: 2px solid #0a4a78; text-align: center; width: 87px; }
.rn { padding-left: 12px; }
.ms { width: 55px; }
.br .on { width: 62px; }

.status { height: 26px; background: #f0f0f0; display: flex; align-items: center; color: #555; border-bottom: 1px solid #ddd; }
.ready { width: 845px; padding-left: 6px; }
.sicons { display: flex; align-items: center; width: 194px; }
.sicons span { width: 21.700px; height: 20px; display: flex; align-items: center; justify-content: center; }
.sicons .son { background: #c9c9c9; }
.ssep { width: 1px; height: 16px; background: #d5d5d5; margin: 0 2px; }
.sicons .cubeb { width: 36px; }
.s1 { width: 76px; border-right: 1px solid #333; }
.s2 { width: 50px; padding-left: 6px; border-right: 1px solid #333; }
.s3 { width: 32px; padding-left: 7px; }
.s4 { width: 28px; }
.s5 { width: 17px; }

.taskbar { height: 37px; background: #101010; display: flex; justify-content: space-between; color: #eee; }
.apps { display: flex; margin-left: -1px; }
.apps span { width: 46px; height: 37px; display: flex; align-items: center; justify-content: center; }
.apps .tv { padding-right: 3px; }
.run { background: linear-gradient(#7ab4e4, #7ab4e4) 50% 100% / 38px 1px no-repeat; }
.act { background: linear-gradient(#7ab4e4, #7ab4e4) 50% 100% / 46px 1px no-repeat, #333; }
.tray { display: flex; align-items: center; width: 235px; }
.t2 { margin-left: 11px; }
.t3 { margin-left: 6px; }
.t4 { margin-left: 6px; }
.lang { width: 40px; text-align: center; line-height: 16px; }
.clock { width: 60px; text-align: center; line-height: 16px; letter-spacing: -.3px; }
.t5 { margin-left: 14px; margin-top: 2px; }
.one { font: 11px "Open Sans", sans-serif; fill: #fff; }
.peek { width: 1px; height: 37px; background: #666; margin-left: 12px; }
.edge { position: absolute; right: 0; top: 0; width: 4px; height: 472px; background: linear-gradient(90deg, transparent 1px, #e8b4b4 1px 2px, transparent 2px), linear-gradient(#148a58 50px, #cddcd4 50px 175px, #a8b8b0 175px, #dde6e2); }

.dlg { position: absolute; background: #f0f0f0; }
.dtitle { background: #fff; display: flex; align-items: center; justify-content: space-between; }
.inp { border: 1px solid #7a7a7a; background: #fff; display: flex; align-items: center; padding-left: 3px; color: #222; }
.cmb { justify-content: space-between; padding-right: 3px; }
.gray { background: #e1e1e1; border-color: #adadad; }
.btn { background: #e1e1e1; border: 1px solid #adadad; height: 20px; line-height: 18px; text-align: center; width: 69px; color: #222; }

.brick { left: 977px; top: 19px; width: 296px; height: 297px; border: 1px solid #c9c9c9; box-shadow: 0 2px 6px rgba(0,0,0,.35); font-size: 10.500px; letter-spacing: -.3px; }
.brick .dtitle { height: 27px; padding: 0 8px 2px 7px; color: #999; font-size: 11px; }
.bbody { display: flex; padding-left: 9px; gap: 12px; }
.bform { width: 195px; display: grid; grid-template-columns: 88px 88px; column-gap: 19px; grid-template-rows: 24px 19px 27px 19px 21px 19px 22px 19px 27px 20px 21px 20px; }
.bform label { align-self: end; }
.bform .inp { padding-left: 4px; padding-bottom: 1px; }
.bform .up { padding-bottom: 2px; }
.w2 { grid-column: 1 / 3; }
.bbtns { padding-top: 11px; display: flex; flex-direction: column; gap: 7.500px; }
.bbtns .btn { width: 68px; }
.grip { position: absolute; right: 0; bottom: 0; }

.mat { left: 69px; top: 57px; width: 392px; height: 583px; border: 1px solid #3c86c4; box-shadow: 0 4px 14px rgba(0,0,0,.4); font-family: "Liberation Sans", sans-serif; letter-spacing: -.45px; }
.mat .dtitle { height: 30px; padding: 0 9px 3px 7px; font: 11px "Open Sans", sans-serif; letter-spacing: -.3px; color: #111; }
.mat .dtitle svg { width: 11px; height: 11px; }
.prob { display: flex; align-items: center; padding: 9px 0 0 13px; height: 29px; letter-spacing: -.2px; }
.prob span { width: 75px; }
.prob .inp { width: 160px; height: 20px; padding-left: 2px; background: #e1e6ee; border-color: #7da2c4; }
.mtabs { display: flex; align-items: flex-end; padding-left: 6px; height: 25px; }
.mtabs span { height: 17px; border: 1px solid #d9d9d9; border-left: 0; border-bottom: 0; padding: 0 3px; line-height: 17px; text-align: center; width: 57px; letter-spacing: -.4px; }
.mtabs .on { width: 48px; height: 20px; line-height: 21px; background: #fff; border-left: 1px solid #d9d9d9; }
.mtabs span:nth-child(2) { width: 64px; }
.mtabs span:nth-child(4) { width: 47px; }
.mtabs span:nth-child(5) { width: 59px; }
.mtabs span:nth-child(6) { width: 43px; }
.pane { margin: 0 7px 0 5px; height: 463px; border: 1px solid #dcdcdc; background: #fff; padding: 11px 0 0 13px; }
fieldset { margin: 0; padding: 0 0 0 10px; border: 1px solid #dcdcdc; width: 346px; min-width: 0; }
legend { padding: 0 4px 0 3px; margin-left: -6px; height: 12px; line-height: 12px; letter-spacing: -.4px; }
.fs1 { height: 190px; }
.f1 { display: grid; grid-template-columns: 175px 113px; grid-template-rows: 21px 20px 20px 20px 23px 20px 24px 20px; letter-spacing: -.3px; }
.f1 > * { grid-column: 1; }
.f1 label { align-self: center; padding-bottom: 1px; }
.f1 label:nth-of-type(4) { padding-top: 2px; }
.f1 .inp { width: 113px; padding-left: 2px; }
.f1 .cmb { width: 114px; padding-left: 3px; }
.f1 .mu, .f1 .mui { grid-column: 2; }
.f1 .mu { padding-top: 6px; grid-row: 7; }
.f1 .mui { grid-row: 8; }
.foc { border-color: #3f88c0; }
mark { background: #0a70cc; color: #fff; line-height: 13px; }
.cmb svg:only-child { margin-left: auto; }
.fs2 { height: 103px; margin-top: 10px; }
.f2 { display: flex; height: 47px; }
.swatch { margin: 8px 0 0 2px; width: 68px; height: 20px; background: #0ff; border: 2px solid #e4e4e4; border-right-color: #777; border-bottom-color: #777; }
.slide { margin-left: 113px; }
.sl { display: flex; justify-content: space-between; width: 138px; margin-left: -3px; height: 16px; line-height: 13px; letter-spacing: -.35px; }
.ck2 { display: grid; grid-template-columns: 142px 1fr; grid-auto-rows: 19px; }
.ck { display: flex; align-items: center; gap: 2px; letter-spacing: -.47px; }
.ck i { width: 12px; height: 12px; border: 1px solid #333; background: #fff; flex: none; }
.ck i svg { margin: -1px; }
.lib { margin-top: 8px; height: 14px; }
.mbtns { display: flex; gap: 7px; padding: 8px 0 0 88px; letter-spacing: -.3px; }
.mbtns .btn { padding-right: 1px; }
.def { border: 2px solid #1a78cc; line-height: 16px; }
.cursor { position: absolute; left: 101px; top: 137px; }
```
